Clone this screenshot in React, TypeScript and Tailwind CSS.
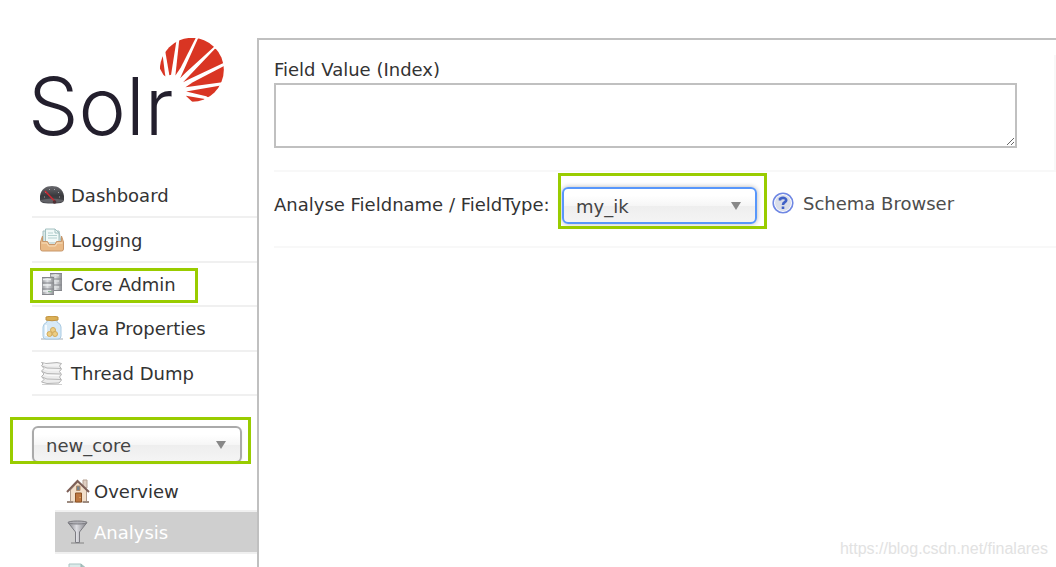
import React, { useState } from "react"

function SunLogo() {
  return (
    <svg viewBox="422 24 191 191" className="size-16" aria-hidden="true">
      <clipPath id="sun">
        <circle cx="517" cy="119" r="95.5" />
      </clipPath>
      <g clipPath="url(#sun)" fill="#d93523">
        <path d="M430 76 438 139 432 134 418 108 410 90Z" />
        <path d="M437 60 473 20 455 134 450 135Z" />
        <path d="M481 15 533 15 484 112 468 136Z" />
        <path d="M540 15 590 44 500 126 482 144Z" />
        <path d="M586 56 622 62 622 94 510 146 491 156Z" />
        <path d="M622 103 622 154 498 171 520 156Z" />
        <path d="M612 164 580 210 560 198 500 184Z" />
        <path d="M499 196 556 206 540 222 520 216Z" />
      </g>
    </svg>
  )
}

function GaugeIcon() {
  return (
    <svg viewBox="0 0 24 24" className="size-6 shrink-0" aria-hidden="true">
      <defs>
        <linearGradient id="gauge" x1="0" y1="0" x2="0" y2="1">
          <stop offset="0" stopColor="#69696e" />
          <stop offset=".55" stopColor="#3a3a3e" />
          <stop offset="1" stopColor="#4c4c51" />
        </linearGradient>
      </defs>
      <path d="M0 17V13C1 6 6 3 12 3S23 6 24 13V17Q24 19 21 20L16 20.500H8L3 20Q0 19 0 17Z" fill="url(#gauge)" />
      <path d="M1 17Q12 14 23 17V18.500Q12 21 1 18.500Z" fill="#626267" />
      <path d="M4 14H5M5 9.500H6M9 6.500H10M14 6.500H15M18 9.500H19M19 14H20" stroke="#a5a5aa" />
      <path d="M5 8 15 18.500" stroke="#cf2630" strokeWidth="1.500" />
      <circle cx="14.500" cy="19" r="1.800" fill="#503136" />
    </svg>
  )
}

function InboxIcon() {
  return (
    <svg viewBox="0 0 24 24" className="size-6 shrink-0" aria-hidden="true">
      <path d="M3 3H19L21 14H3Z" fill="#dbe9e8" stroke="#a9c2c3" />
      <path d="M5.500 1H15L19 5V15H5.500Z" fill="#f1f9f8" stroke="#a2c0c0" />
      <path d="M15 1V5H19" fill="none" stroke="#a2c0c0" />
      <path d="M8 5H13M8 7.500H17M8 10H17" stroke="#b5d1d0" />
      <path d="M2.500 8 0.500 14V21Q0.500 23 2.500 23H21.500Q23.500 23 23.500 21V14L21.500 8V13.500H16.500L15 16.500H9L7.500 13.500H2.500Z" fill="#e9ba86" stroke="#c8976a" />
      <path d="M1.500 15H7L8.500 18H15.500L17 15H22.500" fill="none" stroke="#f8dfbd" />
    </svg>
  )
}

function ServersIcon() {
  return (
    <svg viewBox="0 0 24 24" className="size-6 shrink-0" aria-hidden="true">
      <defs>
        <linearGradient id="server">
          <stop offset="0" stopColor="#96989c" />
          <stop offset=".45" stopColor="#dfe1e4" />
          <stop offset="1" stopColor="#898b8f" />
        </linearGradient>
      </defs>
      <path d="M10 1H22V19H10Z" fill="url(#server)" />
      <path d="M10 1.500H22M10 7H22M10 13H22M10 18.500H22" stroke="#85878c" />
      <path d="M11 3.500H19M11 9H19M11 15H19" stroke="#dcdee0" strokeWidth="1.500" />
      <path d="M2 5H14V23H2Z" fill="url(#server)" />
      <path d="M2 5.500H14M2 11H14M2 17H14M2 22.500H14" stroke="#85878c" />
      <path d="M3 7.500H11M3 13H11M3 19H11" stroke="#eceef0" strokeWidth="1.500" />
      <path d="M8 19.500H12" stroke="#8ab795" />
    </svg>
  )
}

function JarIcon() {
  return (
    <svg viewBox="0 0 24 24" className="size-6 shrink-0" aria-hidden="true">
      <path d="M1 23H23" stroke="#d2d6d9" strokeWidth="2" />
      <path d="M7 4H17V6Q21 8 21 11V20Q21 23 18 23H6Q3 23 3 20V11Q3 8 7 6Z" fill="#d7e9f6" stroke="#a9cae2" />
      <path d="M6 9V20" stroke="#f5fbff" strokeWidth="2" />
      <path d="M6 1Q12 -1 18 1V4Q12 5.500 6 4Z" fill="#dbb056" stroke="#c1923f" />
      <g fill="#edce84" stroke="#d3ab5a">
        <circle cx="13" cy="14" r="2.500" />
        <circle cx="9.500" cy="18" r="2.500" />
        <circle cx="15" cy="18" r="2.500" />
      </g>
    </svg>
  )
}

function StackIcon() {
  return (
    <svg viewBox="0 0 24 24" className="size-6 shrink-0" aria-hidden="true">
      <path d="M2 23.500H22" stroke="#d0d0d0" />
      <path
        d="M1.500 1.500 6 2.500 17 1.500 21.500 2.500 19.500 5 21.500 8 19.500 10.500 21.500 13.500 19.500 16 21.500 19 19 22 7 22.500 1.500 21 4 18.500 1.500 15.500 4 13 1.500 10 4 7.500 1.500 4.500 3 3Z"
        fill="#ececec"
        stroke="#b4b4b4"
      />
      <path d="M2 5 7 7 21 7.500M2 10.500 7 12.500 21 13M2 16 7 18 21 18.500" fill="none" stroke="#b8b8b8" />
      <path d="M4 8 8 9 19 9M4 13.500 8 14.500 19 14.500M4 3 8 4 19 4" fill="none" stroke="#fafafa" />
    </svg>
  )
}

function HouseIcon() {
  return (
    <svg viewBox="0 0 24 24" className="size-6 shrink-0" aria-hidden="true">
      <path d="M17 1H21V9H17Z" fill="#e0cfc2" stroke="#b5a093" />
      <path d="M4.500 11 12 3 20.500 11V23H4.500Z" fill="#f2dfca" stroke="#b09a89" />
      <path d="M1 13 11.500 2 23 13" fill="none" stroke="#7d5f57" strokeWidth="2" />
      <path d="M10.500 7H14V11.500H10.500Z" fill="#73808c" stroke="#b18a67" />
      <path d="M9.500 14H15.500V23H9.500Z" fill="#bd7740" stroke="#8b5225" />
      <path d="M14 18V19" stroke="#f0cf83" />
      <path d="M1 23H7M17 23H23" stroke="#9c8b80" strokeWidth="2" />
    </svg>
  )
}

function FunnelIcon() {
  return (
    <svg viewBox="0 0 24 24" className="size-6 shrink-0" aria-hidden="true">
      <defs>
        <linearGradient id="funnel">
          <stop offset="0" stopColor="#7d7d83" />
          <stop offset=".45" stopColor="#dedee3" />
          <stop offset="1" stopColor="#7d7d83" />
        </linearGradient>
      </defs>
      <path d="M5 23H18" stroke="#a9a9a9" strokeWidth="2" />
      <path d="M2 2.500H21L13.500 12V22.500H9.500V12Z" fill="url(#funnel)" stroke="#7c7c82" />
      <ellipse cx="11.500" cy="2.500" rx="9.500" ry="1.500" fill="#b1b1b7" stroke="#7c7c82" />
    </svg>
  )
}

function PageIcon() {
  return (
    <svg viewBox="0 0 24 24" className="size-6 shrink-0" aria-hidden="true">
      <path d="M3 1H15L21 6V23H3Z" fill="#dcebea" stroke="#abc4c3" />
      <path d="M15 1V6H21" fill="#a5bfbc" stroke="#9ab5b2" />
    </svg>
  )
}

function HelpIcon() {
  return (
    <svg viewBox="0 0 22 22" className="size-[22px] shrink-0" aria-hidden="true">
      <circle cx="11" cy="11" r="9.800" fill="#fff" stroke="#6f87e3" strokeWidth="1.600" />
      <circle cx="11" cy="11" r="8" fill="#d9dde8" />
      <path d="M8 8.500V6.800Q11 5 13.200 6.500T13 10Q11 11 11 13" fill="none" stroke="#3f60c6" strokeWidth="2.600" />
      <path d="M9.700 14.500H12.300V17H9.700Z" fill="#3f60c6" />
    </svg>
  )
}

const mainLinks = [
  { label: "Dashboard", icon: <GaugeIcon /> },
  { label: "Logging", icon: <InboxIcon /> },
  { label: "Core Admin", icon: <ServersIcon />, marked: true },
  { label: "Java Properties", icon: <JarIcon /> },
  { label: "Thread Dump", icon: <StackIcon /> },
]

function Dropdown({
  id,
  label,
  value,
  focused,
}: {
  id: string
  label?: string
  value: string
  focused?: boolean
}) {
  const [current, setCurrent] = useState(value)
  return (
    <div className="relative">
      <select
        id={id}
        aria-label={label}
        value={current}
        onChange={(e) => setCurrent(e.target.value)}
        className={
          "block h-[37px] w-full appearance-none rounded-md border-2 bg-[linear-gradient(#fff_20%,#f6f6f6_50%,#eee_52%,#f4f4f4_100%)] pt-0.5 pl-3 text-[#444] outline-none " +
          (focused ? "border-[#5897fb] shadow-[0_0_5px_rgba(0,0,0,0.3)]" : "border-[#aaa] shadow-[0_1px_2px_rgba(0,0,0,0.1)]")
        }
      >
        <option>{value}</option>
      </select>
      <svg viewBox="0 0 10 8" className="pointer-events-none absolute top-[15px] right-4 h-2 w-2.5" aria-hidden="true">
        <path d="M0 0H10L5 8Z" fill="#888" />
      </svg>
    </div>
  )
}

function Sidebar() {
  return (
    <aside className="w-[257px] shrink-0 pt-[38px] pl-8">
      <a href="#/" className="flex h-[136px] w-48 items-start justify-between text-[#231f2d]">
        <span className="-ml-1 w-32 pt-7 font-[Inter,sans-serif] text-[80px] leading-none font-light">Solr</span>
        <SunLogo />
      </a>
      <nav className="grid h-[222px] grid-rows-5">
        {mainLinks.map((item) => (
          <a key={item.label} href="#/" className="relative flex items-center gap-[7px] border-b-2 border-[#f0f0f0] pl-2">
            {item.icon}
            <span className="pt-0.5">{item.label}</span>
            {item.marked && <span className="absolute top-[5px] -left-0.5 h-[35px] w-42 border-3 border-[#9c0]" />}
          </a>
        ))}
      </nav>
      <div className="relative mt-[30px] mr-[15px]">
        <Dropdown id="core" label="Core Selector" value="new_core" />
        <span className="pointer-events-none absolute -top-[9px] -left-[22px] h-[47px] w-[241px] border-3 border-[#9c0]" />
      </div>
      <nav className="mt-2 ml-[23px]">
        <a href="#/" className="flex h-[41px] items-center gap-1 border-b-2 border-[#f0f0f0] pl-[11px]">
          <HouseIcon />
          <span className="pt-0.5">Overview</span>
        </a>
        <a href="#/" className="flex h-[42px] items-center gap-1 border-b-2 border-[#f0f0f0] bg-[#cfcfcf] bg-clip-padding pl-[11px] text-white">
          <FunnelIcon />
          <span className="pt-0.5">Analysis</span>
        </a>
        <a href="#/" className="flex h-[41px] items-center pl-[11px]">
          <PageIcon />
        </a>
      </nav>
    </aside>
  )
}

function AnalysisForm() {
  return (
    <form>
      <div className="border-b-2 border-[#f8f8f8] pt-[15px]">
        <div className="border-r-2 border-[#f8f8f8] pr-[37px] pb-[22px]">
          <label htmlFor="index-value" className="block h-7 leading-[30px]">
            Field Value (Index)
          </label>
          <textarea id="index-value" className="block h-[65px] w-full resize border-2 border-[#c0c0c0] bg-white p-1 outline-none" />
        </div>
      </div>
      <div className="flex h-[76px] items-start border-b-2 border-[#f8f8f8] pt-[15px]">
        <label htmlFor="field-type" className="w-72 shrink-0 pt-1 leading-7 whitespace-nowrap">
          Analyse Fieldname / FieldType:
        </label>
        <div className="relative w-[195px]">
          <Dropdown id="field-type" value="my_ik" focused />
          <span className="pointer-events-none absolute -top-[14px] -left-1 h-14 w-[209px] border-3 border-[#9c0]" />
        </div>
        <a href="#/" className="ml-[15px] flex h-8 items-center gap-[9px] text-[#4d4d4d]">
          <HelpIcon />
          <span className="pt-0.5">Schema Browser</span>
        </a>
      </div>
    </form>
  )
}

export default function App() {
  return (
    <div className="relative flex h-screen overflow-hidden bg-white font-['DejaVu_Sans',sans-serif] text-[18px] leading-6 text-[#333]">
      <Sidebar />
      <main className="mt-[38px] min-w-0 flex-1 border-t-2 border-l-2 border-[#c0c0c0] pl-[15px]">
        <AnalysisForm />
      </main>
      <p className="absolute right-2 bottom-1.5 font-['Liberation_Sans',sans-serif] text-base text-[#e2e2e2]">
        https://blog.csdn.net/finalares
      </p>
    </div>
  )
}
